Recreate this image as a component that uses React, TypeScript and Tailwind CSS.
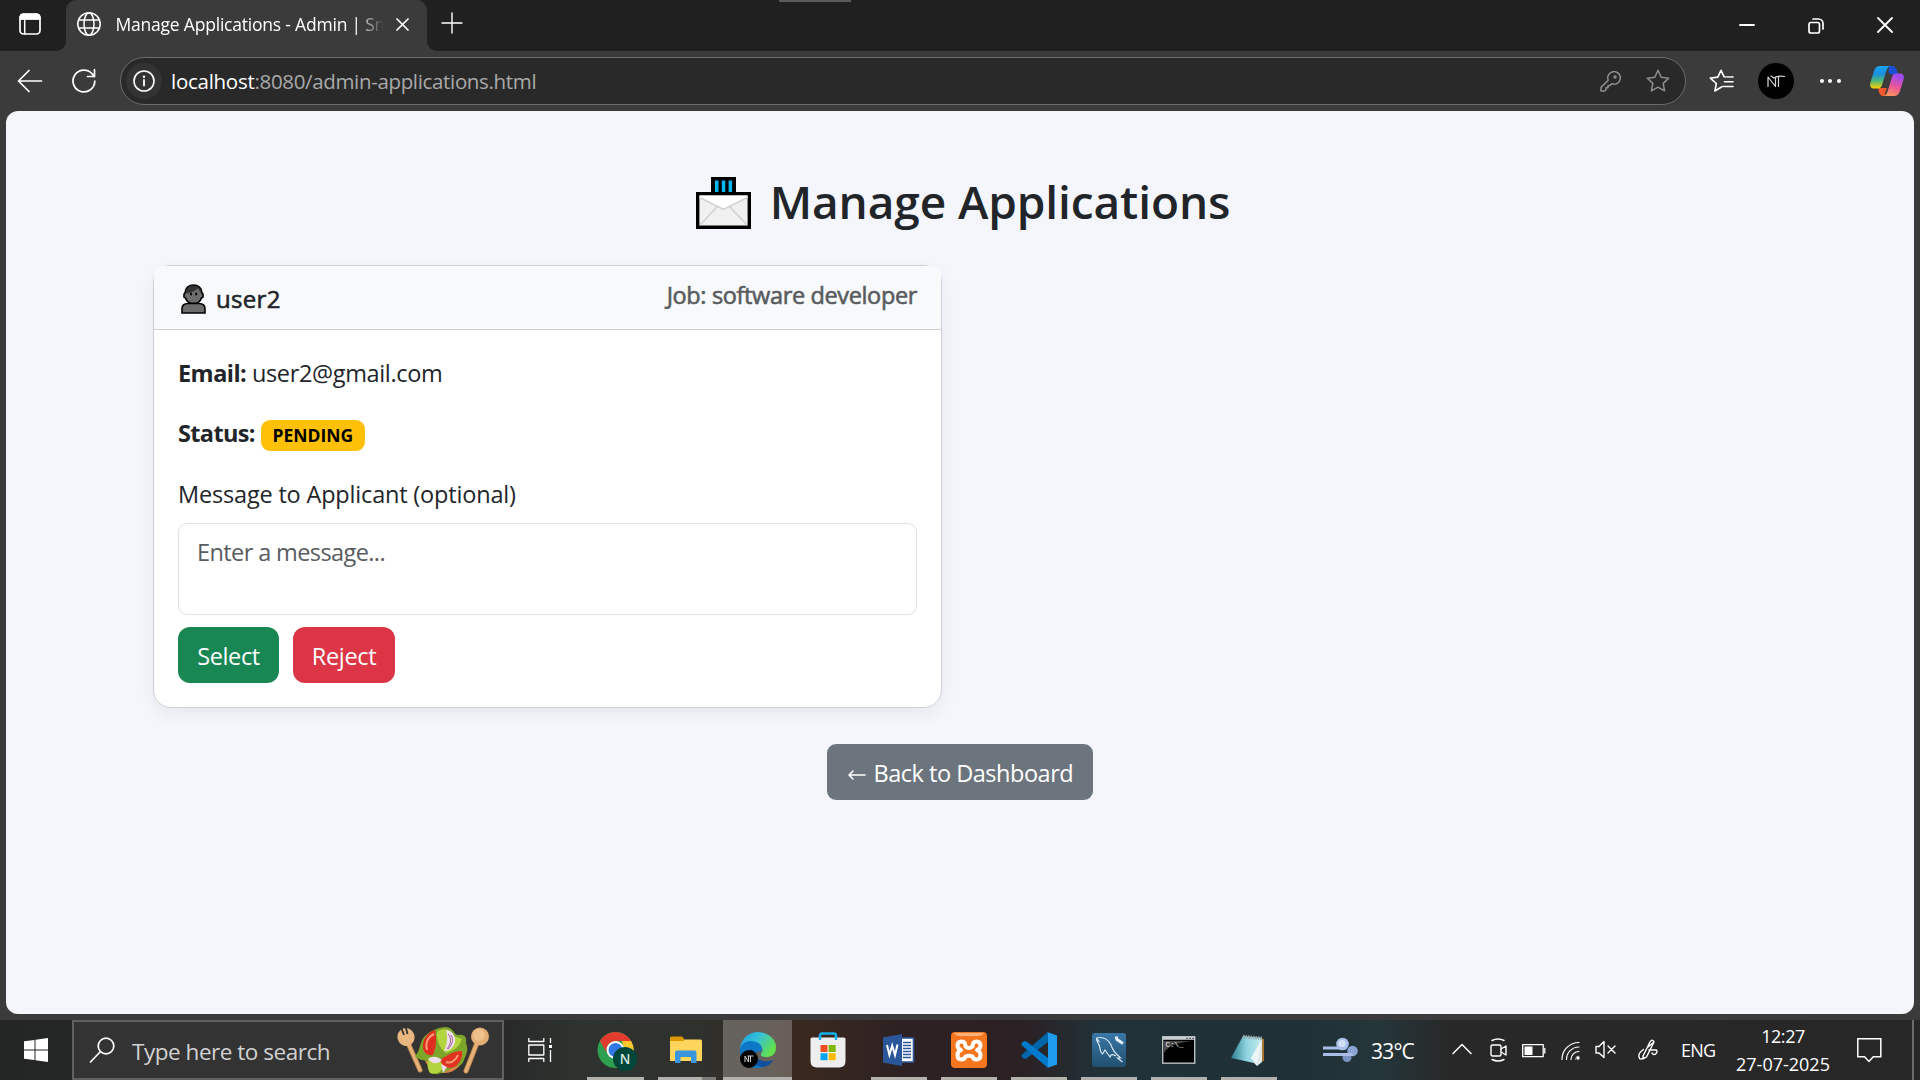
import React from "react";

type IconProps = { w: number; h: number; children: React.ReactNode; className?: string };

function Icon({ w, h, children, className }: IconProps) {
  return (
    <svg width={w} height={h} viewBox={`0 0 ${w} ${h}`} fill="none" stroke="currentColor" strokeLinecap="round" strokeLinejoin="round" className={`block shrink-0 ${className ?? ""}`}>
      {children}
    </svg>
  );
}

function TabStrip() {
  return (
    <div className="relative flex h-[51px] shrink-0 bg-[#202020] text-white">
      <div className="absolute left-[779px] top-0 h-[2px] w-[72px] bg-[#5a5a5a]" />
      <div className="flex h-full w-[66px] items-center pl-[19px] pb-[3px]">
        <Icon w={22} h={22}>
          <rect x="1" y="1" width="20" height="20" rx="3.5" strokeWidth="1.7" />
          <path d="M1 6V4a3 3 0 0 1 3-3h14a3 3 0 0 1 3 3v2z" fill="currentColor" strokeWidth="1" />
          <path d="M5.7 6v15" strokeWidth="1.5" />
        </Icon>
      </div>
      <div className="relative flex h-full w-[361px] rounded-t-[10px] bg-[#3b3b3b]">
        <svg width="10" height="10" className="absolute -left-[10px] bottom-0"><path d="M10 0v10H0A10 10 0 0 0 10 0z" fill="#3b3b3b" /></svg>
        <svg width="10" height="10" className="absolute -right-[10px] bottom-0"><path d="M0 0v10h10A10 10 0 0 1 0 0z" fill="#3b3b3b" /></svg>
        <Icon w={24} h={24} className="ml-[11px] mt-[12px]">
          <g strokeWidth="1.5">
            <circle cx="12" cy="12" r="11.2" />
            <ellipse cx="12" cy="12" rx="5" ry="11.2" />
            <path d="M2 8h20M2 16h20" />
          </g>
        </Icon>
        <div className="ml-[14.500px] mt-[9px] h-[30px] w-[272px] whitespace-nowrap leading-[30px] text-[17.5px] tracking-[-0.21px] [mask-image:linear-gradient(to_right,#000_240px,transparent_268px)]">
          Manage Applications - Admin | Sm
        </div>
        <Icon w={13} h={13} className="mt-[18px] ml-[8.500px]"><path d="M1 1l11 11M12 1L1 12" strokeWidth="1.7" /></Icon>
      </div>
      <Icon w={22} h={22} className="ml-[14px] mt-[12px]"><path d="M11 1v20M1 11h20" strokeWidth="1.4" /></Icon>
      <div className="ml-auto flex pr-[27px]">
        <Icon w={16} h={16} className="mt-[17px]"><path d="M1 8h14" strokeWidth="1.9" /></Icon>
        <Icon w={16} h={16} className="ml-[53px] mt-[18px]">
          <g strokeWidth="1.7"><rect x="1" y="4.5" width="10.5" height="10.5" rx="2" /><path d="M5 1h5.500a4.500 4.500 0 0 1 4.500 4.500V11" /></g>
        </Icon>
        <Icon w={16} h={16} className="ml-[53px] mt-[17px]"><path d="M1 1l14 14M15 1L1 15" strokeWidth="1.8" /></Icon>
      </div>
    </div>
  );
}

const STAR = "M12 1.300l3.200 6.900 7.500.95-5.500 5.200 1.400 7.500L12 18.200l-6.600 3.650 1.400-7.500-5.500-5.200 7.500-.95z";

function Toolbar() {
  return (
    <div className="flex h-[60px] shrink-0 items-center bg-[#3b3b3b] text-white">
      <div className="flex w-[60px] justify-center">
        <Icon w={26} h={24}><path d="M1.500 12h23M12 1.500L1.500 12 12 22.500" strokeWidth="1.7" /></Icon>
      </div>
      <div className="flex w-[60px] pl-[12px]">
        <Icon w={24} h={26}><path d="M22.800 13A10.900 10.900 0 1 1 20 5.700L22.500 8.500M22.500 1.500v7h-7" strokeWidth="1.7" /></Icon>
      </div>
      <div className="flex h-[48px] w-[1566px] items-center rounded-full border border-[#6b6b6b] bg-[#292929]">
        <div className="ml-[5px] flex h-[36px] w-[36px] items-center justify-center rounded-full bg-[#333333]">
          <Icon w={22} h={22}>
            <circle cx="11" cy="11" r="10" strokeWidth="1.6" /><path d="M11 10v5.500" strokeWidth="1.8" /><circle cx="11" cy="6.800" r="1.200" fill="currentColor" stroke="none" />
          </Icon>
        </div>
        <div className="ml-[9px] whitespace-nowrap text-[20.5px] leading-[30px] text-[#a9a9a9]">
          <span className="tracking-[-0.27px] text-white">localhost</span><span className="tracking-[-0.34px]">:8080/admin-applications.html</span>
        </div>
        <div className="ml-auto mr-[15px] flex items-center gap-[25px] text-[#8f8f8f]">
          <Icon w={21} h={21}>
            <g strokeWidth="1.5"><path d="M8.200 9.300a6.300 6.300 0 1 1 3.600 3.500L10 14.500H8v2.200H6v2.100l-1.300 1.200H1v-3.600z" /><circle cx="15" cy="6" r="1" /></g>
          </Icon>
          <Icon w={24} h={24}><path d={STAR} strokeWidth="1.5" /></Icon>
        </div>
      </div>
      <div className="flex w-[72px] justify-center">
        <Icon w={25} h={24} className="-translate-x-[1px]">
          <path d="M12.500 18l-6.600 4 1.400-7.500-6-5.400 7.500-.95L12 1.300l3.200 6.500 8.800.2M15.500 12.700h8.500M13.500 17.500h10.500" strokeWidth="1.6" />
        </Icon>
      </div>
      <div className="flex h-[36px] w-[36px] items-center justify-center rounded-full bg-black">
        <Icon w={20} h={14}><path d="M2 12.500V3L9.500 12.500V4M5 2l3 2M8.500 3.500q4-2 10-1M12.500 3v9.500" strokeWidth="1.2" stroke="#d8d8d8" /></Icon>
      </div>
      <div className="flex w-[74px] justify-center gap-[4.500px] pr-[2px]">
        <i className="h-[4px] w-[4px] rounded-full bg-white" /><i className="h-[4px] w-[4px] rounded-full bg-white" /><i className="h-[4px] w-[4px] rounded-full bg-white" />
      </div>
      <svg width="36" height="32" viewBox="0 0 36 32" className="block translate-x-[1px]">
        <defs>
          <linearGradient id="cpA" x1="0" y1="0" x2="0" y2="1"><stop offset="0" stopColor="#18a4f0" /><stop offset=".35" stopColor="#1a8fe0" /><stop offset=".65" stopColor="#4cb87a" /><stop offset="1" stopColor="#ffd200" /></linearGradient>
          <linearGradient id="cpB" x1="0.3" y1="0" x2="0" y2="1"><stop offset="0" stopColor="#a24bf0" /><stop offset=".45" stopColor="#e8559a" /><stop offset="1" stopColor="#ffa04d" /></linearGradient>
        </defs>
        <path d="M20 1h3c3 0 4 2 5 5l1 3.500h-5c-3 0-4-1-4.500-3z" fill="#1b4fd8" />
        <path d="M9 23h9l-2 5c-.5 2 1 3 2 3h-3c-3 0-4-1-5-4z" fill="#f4582e" />
        <path d="M11 1h11c-3 0-4 3-5 6l-4 13c-.8 2.500-2 3.500-4 3.500H5c-3.500 0-4.500-2.500-3.500-6L5 6c1-3.500 3-5 6-5z" fill="url(#cpA)" />
        <path d="M25 31H14c3 0 4-3 5-6l4-13c.8-2.500 2-3.500 4-3.500h4c3.500 0 4.500 2.500 3.500 6L31 26c-1 3.500-3 5-6 5z" fill="url(#cpB)" />
      </svg>
    </div>
  );
}

function EnvelopeIcon() {
  return (
    <svg width="56" height="52" viewBox="0 0 56 52" className="block shrink-0">
      <path d="M15 0h25v17H15z" fill="#000" />
      <path d="M19 3.500h3.500V15H19zM25.800 3.500h3.500V15h-3.500zM32.600 3.500h3.500V15h-3.500z" fill="#00b9f2" />
      <path d="M1.700 16.700h51.600v33.600H1.700z" fill="#f1f1f1" stroke="#000" strokeWidth="3.400" />
      <path d="M3.500 18.500h48v2.500L28 32.500 3.500 21z" fill="#fff" />
      <path d="M3.500 20.500l24 12 24-12M4 48l17-18M51 48L34 30" fill="none" stroke="#d0d0d0" strokeWidth="1.500" />
    </svg>
  );
}

function PersonIcon() {
  return (
    <svg width="26" height="30" viewBox="0 0 26 30" className="block shrink-0">
      <path d="M4 9C4 4 8 1 12.500 1S21 4 21 9l1 1v3l-1.500 1c-1 3-4 5.500-8 5.500s-7-2.500-8-5.500L3 13v-3z" fill="#6d6d6d" stroke="#000" strokeWidth="1.600" />
      <path d="M4.800 9.500C4.500 5 8 1.800 12.500 1.800S20 5 20.300 9.500C19 8 18 5.500 16.500 4.500 13 8 8 9 4.800 9.500z" fill="#333" />
      <path d="M10 8.800v2.400M15.200 8.800v2.400" stroke="#000" strokeWidth="1.800" />
      <path d="M1 29v-4c0-3.500 2.500-5.500 6-5.500h11c3.500 0 6 2 6 5.500v4z" fill="#6d6d6d" stroke="#000" strokeWidth="1.600" />
    </svg>
  );
}

function Page() {
  return (
    <div className="h-[909px] bg-[#3b3b3b] px-[6px] pb-[6px]">
      <main className="flex h-[903px] w-[1908px] flex-col rounded-[12px] bg-[#f4f6fb] px-[147px] pt-[60px] text-[#212529]">
        <h1 className="flex h-[60px] justify-center pl-[6px] text-[46px] font-semibold leading-[61px]">
          <span className="mt-[6px]"><EnvelopeIcon /></span>
          <span className="ml-[18px] tracking-[-0.1px]">Manage Applications</span>
        </h1>
        <div className="mt-[34px] grid w-[1612px] grid-cols-2 gap-[36px]">
          <section className="w-[789px] rounded-[18px] border border-[#cdd0d4] bg-white shadow-[0_6px_18px_rgba(0,0,0,0.06)]">
            <header className="flex h-[64px] justify-between rounded-t-[9px] border-b border-[#cdd0d4] bg-[#f8f9fb] px-[24px]">
              <div className="flex pl-[3px] pt-[18px] text-[24px] leading-[32px] tracking-[0.3px] [-webkit-text-stroke:0.6px]">
                <PersonIcon />
                <span className="ml-[9px] mt-[-1px]">user2</span>
              </div>
              <div className="pt-[13px] text-[23.500px] leading-[32px] tracking-[-0.36px] text-[#595c5f] [-webkit-text-stroke:0.6px]">Job: software developer</div>
            </header>
            <div className="h-[377px] px-[24px] text-[23.500px]">
              <p className="pt-[25px] leading-[36px] tracking-[-0.35px]"><b className="font-bold tracking-[-0.55px]">Email:</b> user2@gmail.com</p>
              <p className="mt-[24px] flex leading-[36px]">
                <b className="font-bold tracking-[-0.65px]">Status:</b>
                <span className="ml-[6px] mt-[5px] flex h-[31px] w-[104px] items-center justify-center rounded-[9px] bg-[#ffc107] pb-[2px] text-[17.500px] font-bold text-black">PENDING</span>
              </p>
              <label className="mt-[25px] block leading-[36px] tracking-[-0.18px]">Message to Applicant (optional)</label>
              <div className="mt-[11px] h-[92px] rounded-[9px] border border-[#dee2e6] px-[18px] pt-[10px] leading-[36px] tracking-[-0.6px] text-[#595c5f]">Enter a message...</div>
              <div className="mt-[12px] flex gap-[14px] leading-[58px] tracking-[-0.35px] text-white">
                <div className="h-[56px] w-[101px] rounded-[12px] bg-[#198754] text-center">Select</div>
                <div className="h-[56px] w-[102px] rounded-[12px] bg-[#dc3545] text-center">Reject</div>
              </div>
            </div>
          </section>
        </div>
        <div className="mx-auto mt-[36px] flex h-[56px] w-[266px] rounded-[9px] bg-[#6c757d] pl-[20px] text-[23.500px] leading-[58px] tracking-[-0.48px] text-white">
          <Icon w={19} h={14} className="mt-[24px]"><path d="M2 7h16M6 3L2 7l4 4" strokeWidth="1.600" /></Icon>
          <span className="ml-[7.500px]">Back to Dashboard</span>
        </div>
      </main>
    </div>
  );
}

function Slot({ children, w70, line = true, active }: { children: React.ReactNode; w70?: boolean; line?: boolean; active?: boolean }) {
  return (
    <div className={`relative flex h-[60px] items-center justify-center ${w70 ? "w-[70px]" : "w-[71px]"}`}>
      {active && <div className="absolute inset-x-[1px] inset-y-0 bg-white/25" />}
      <div className="relative">{children}</div>
      {line && <div className={`absolute bottom-0 h-[3px] bg-[#b3b1ac] ${active ? "inset-x-[1px]" : "inset-x-[7px]"}`} />}
    </div>
  );
}

function Salad() {
  return (
    <svg width="94" height="50" viewBox="0 0 94 50" className="block">
      <g stroke="#c98d52" strokeWidth="5" strokeLinecap="round"><path d="M11 17l12 27M80 17L69 45" /></g>
      <g stroke="#e6b27a" strokeWidth="3" strokeLinecap="round"><path d="M11 17l12 27M80 17L69 45" /></g>
      <ellipse cx="9" cy="11" rx="8.500" ry="9" fill="#e8b780" transform="rotate(-18 9 11)" />
      <path d="M4 1l3 8M8.500 0l2 8" stroke="#333" strokeWidth="1.800" />
      <circle cx="83" cy="10.500" r="9" fill="#e3ae75" /><circle cx="82" cy="9" r="6" fill="#edc08c" />
      <circle cx="47" cy="26" r="21" fill="#d8854a" />
      <path d="M18 30c6-6 4-14 10-20 5-5 14-9 20-9 8 0 8 6 12 8 6-1 10 0 9 8 3 7 0 12-2 17-3 8-8 5-13 9-6 3-14 7-20 4-4-3 0-8-4-12-4-1-9-1-12-5z" fill="#7da52a" />
      <path d="M40 6c5-5 15-3 17 4l8 3c-3 9-9 12-16 14-6-4-10-14-9-21zM32 32c8-3 14 1 15 8-3 7-9 9-14 7-3-5-3-10-1-15z" fill="#b2d43f" />
      <path d="M38 4c-8 2-13 11-12 18 1 5 5 8 10 7 3-7 4-15 2-25z" fill="#df2d20" /><path d="M37 8c-6 3-9 9-7 16" stroke="#ff9a78" strokeWidth="2" fill="none" />
      <path d="M43 34c5-4 14-9 22-9 1 8-4 16-11 17-6 0-9-3-11-8z" fill="#e13222" /><path d="M49 36c5 2 10-2 12-7" stroke="#ff9a78" strokeWidth="2" fill="none" />
      <path d="M49 4c7 1 10 7 9 12s-5 9-11 9c3-6 4-13 2-21z" fill="#efdcec" /><path d="M51 8c4 4 3 10-1 15M54 9c3 5 1 10-3 14" stroke="#a06498" fill="none" />
      <path d="M31 33c5-4 10-2 14 1-4 4-9 5-14-1zM44 38l6 3-4 6z" fill="#efdcec" />
    </svg>
  );
}

function Taskbar() {
  return (
    <footer className="flex h-[60px] shrink-0 bg-[linear-gradient(to_right,#242525_0px,#282928_500px,#2e332f_580px,#2f312d_700px,#39291f_800px,#2e2123_900px,#2b2023_1020px,#203238_1100px,#1f3136_1300px,#24363a_1380px,#282828_1450px,#272727_1920px)] text-white">
      <div className="flex w-[72px] items-center justify-center">
        <svg width="24" height="24" viewBox="0 0 24 24" className="block"><path d="M0 3.300L10.500 2v9.500H0zM11.500 1.800L24 0v11.500H11.500zM0 12.500h10.500V22L0 20.700zM11.500 12.500H24V24l-12.500-1.800z" fill="#fff" /></svg>
      </div>
      <div className="flex h-[60px] w-[432px] border-2 border-[#5f5f5f] bg-[#333333]">
        <Icon w={26} h={26} className="ml-[15px] mt-[15px]"><circle cx="17" cy="9" r="7.800" strokeWidth="1.700" /><path d="M11.500 14.500L1.500 25" strokeWidth="1.700" /></Icon>
        <div className="ml-[17px] mt-[14px] w-[265px] whitespace-nowrap text-[22.500px] leading-[32px] tracking-[-0.47px] text-[#d2d2d2]">Type here to search</div>
        <div className="mt-[4px]"><Salad /></div>
      </div>
      <div className="flex w-[76px] items-center pl-[24px]">
        <Icon w={25} h={24}><g strokeWidth="1.300" strokeLinecap="butt"><path d="M.8 0v3.500h15V0M.8 24v-3.500h15V24M.8 7h15v10H.8zM22.500 0v5M22.500 12v12" /><path d="M21 7h3v3h-3z" fill="currentColor" stroke="none" /></g></Icon>
      </div>
      <Slot>
        <svg width="40" height="40" viewBox="0 0 40 40" className="block translate-x-[1px] translate-y-[1px]">
          <circle cx="18.500" cy="19" r="18" fill="#2e9e4f" />
          <path d="M3 10A18 18 0 0 1 34.100 10H18.500A9 9 0 0 0 10.700 23.500z" fill="#e33b2e" />
          <path d="M34.100 10A18 18 0 0 1 18.500 37L26.300 23.500A9 9 0 0 0 26 14l-1-4z" fill="#fcc72b" />
          <circle cx="18.500" cy="19" r="9" fill="#fff" /><circle cx="18.500" cy="19" r="7" fill="#2f78e6" />
          <circle cx="28" cy="28" r="12" fill="#00463b" />
          <text x="28" y="33" textAnchor="middle" fontSize="13.500" fontWeight="600" fontFamily="Open Sans" fill="#d5e6e2">N</text>
        </svg>
      </Slot>
      <Slot>
        <svg width="34" height="28" viewBox="0 0 34 28" className="block -translate-x-[1px]">
          <path d="M1 2q0-1.500 1.500-1.500H13l3 3.500v3H1z" fill="#dd9a00" /><path d="M1 5h13l2-1.500h15.500q1.500 0 1.500 1.500v20H1z" fill="#ffd55c" />
          <path d="M6 27V16.500q0-2 2-2h17.500q2 0 2 2V27H22v-6H11.500v6z" fill="#3a96dd" />
        </svg>
        <div className="absolute -bottom-[16px] right-[-12px] z-10 h-[3px] w-[14px] bg-[#7d7c79]" />
      </Slot>
      <Slot active>
        <svg width="38" height="38" viewBox="0 0 38 38" className="block">
          <defs><linearGradient id="eg" x1="0" y1="0" x2="1" y2=".5"><stop offset="0" stopColor="#1c9be0" /><stop offset=".5" stopColor="#35c1d8" /><stop offset="1" stopColor="#62e04e" /></linearGradient></defs>
          <path d="M1 19C1 9 9 1 19 1s18 7 18 15-5 10-10 10-6-2-4.500-4 2-6-3-8.500S6 9 1 19z" fill="url(#eg)" />
          <path d="M1 19c0-5 5-9 11-9 7 0 11 4 11 8 0 1-.5 2-1.500 3-2-2-6 0-5 5 1 7 9 9 15 5C28 36 22 37 18 37 8 37 1 29 1 19z" fill="#0d78c8" />
          <path d="M12 18c-1 10 4 18 12 18 5-1 8-3 10-7-7 3-16 1-18-6 0-2 0-3-4-5z" fill="#124f9c" />
          <circle cx="10" cy="28" r="9" fill="#000" />
          <path d="M6 31v-6l3.500 6v-6M8.500 25h6M11.500 25v6" stroke="#ccc" fill="none" />
        </svg>
      </Slot>
      <Slot line={false}>
        <svg width="36" height="36" viewBox="0 0 36 36" className="block -translate-x-[1px]">
          <path d="M10 7V3.500Q10 1.500 12 1.500h12q2 0 2 2V7" fill="none" stroke="#16b0ee" strokeWidth="2.400" />
          <path d="M.5 7q0-1.500 1.500-1.500h32q1.500 0 1.500 1.500v22q0 6.500-6.500 6.500H7Q.5 35.500.5 29z" fill="#eeeeee" />
          <path d="M10 4v4M26 4v4" stroke="#16b0ee" strokeWidth="2.400" />
          <path d="M10.500 13h7v7h-7z" fill="#f25022" /><path d="M18.700 13h7v7h-7z" fill="#7fba00" /><path d="M10.500 21.200h7v7h-7z" fill="#00a4ef" /><path d="M18.700 21.200h7v7h-7z" fill="#ffb900" />
        </svg>
      </Slot>
      <Slot w70>
        <svg width="32" height="32" viewBox="0 0 32 32" className="block">
          <path d="M17 4h13.500v24H17z" fill="#fff" stroke="#2b579a" strokeWidth="1.600" /><path d="M20 8.500h8M20 11.500h8M20 14.500h8M20 17.500h8M20 20.500h8M20 23.500h8" stroke="#2b579a" strokeWidth="1.300" />
          <path d="M0 3.500L19 0v32L0 28.500z" fill="#2b579a" /><path d="M4 11l2.400 10L9.200 11.500 12 21l2.500-10.500" fill="none" stroke="#fff" strokeWidth="2" />
        </svg>
      </Slot>
      <Slot w70>
        <svg width="36" height="36" viewBox="0 0 36 36" className="block">
          <rect width="36" height="36" rx="4" fill="#f4761f" /><path d="M3 1h30q-2 3-6 3H9Q5 4 3 1z" fill="#fbb27c" />
          <path d="M14.500 14.500q0-5-4-5t-4 4q0 3 3.500 4.500-3.500 1.500-3.500 5 0 4.500 4 4.500 3 0 4-3 3.500-1.500 7 0 1 3 4 3 4 0 4-4.500 0-3.500-3.500-5 3.500-1.500 3.500-4.500 0-4-4-4t-4 5q-3.500 3-7 0z" fill="none" stroke="#fff" strokeWidth="4" strokeLinejoin="round" />
        </svg>
      </Slot>
      <Slot w70>
        <svg width="36" height="36" viewBox="0 0 36 36" className="block">
          <path d="M1 22.500L27 0v10L5.500 26.500q-1.500 1-3 0l-1.700-1.500Q0 23.500 1 22.500z" fill="#0065a9" />
          <path d="M1 13.500L27 36V26L5.500 9.500q-1.500-1-3 0L.8 11Q0 12.500 1 13.500z" fill="#007acc" />
          <path d="M26 0l10 3.500v29L26 36q1 0 1-2V2q0-2-1-2z" fill="#1f9cf0" />
        </svg>
      </Slot>
      <Slot w70>
        <svg width="34" height="34" viewBox="0 0 34 34" className="block">
          <defs><linearGradient id="mg" x1="0" y1="0" x2="0" y2="1"><stop offset="0" stopColor="#3a78a8" /><stop offset="1" stopColor="#21506f" /></linearGradient></defs>
          <rect width="34" height="34" rx="3" fill="url(#mg)" />
          <path d="M4.500 5c6-1.500 11 1 14 6 2 4 2 7 7 11l3 3h-3l5 4M4.500 5c0 4 2 5 3 8s0 6 3 8l2.500-4 5 7c1-3 2-3 6-1M4.500 5l3 4" fill="none" stroke="#d8e8f2" strokeWidth="1.200" />
          <path d="M24 3.500l1 3 3 2 3 2" stroke="#e8f2f8" strokeWidth="2.800" fill="none" />
        </svg>
      </Slot>
      <Slot w70>
        <svg width="34" height="28" viewBox="0 0 34 28" className="block">
          <rect x=".7" y=".7" width="32" height="26.500" fill="#000" stroke="#b9c0c4" strokeWidth="1.400" /><path d="M1 1h32v2.800H1z" fill="#c9ced2" /><path d="M24 2.300h8" stroke="#555" strokeDasharray="2 1" />
          <path d="M2 5h28C18 6 6 9 2 17z" fill="#4a4a4a" />
          <text x="3.500" y="10.500" fontSize="7.500" fontFamily="Liberation Mono" fill="#eee">C:\_</text>
        </svg>
      </Slot>
      <Slot w70>
        <svg width="34" height="32" viewBox="0 0 34 32" className="block -translate-x-[1px]">
          <defs><linearGradient id="ng" x1="0" y1="0" x2="1" y2="0"><stop offset="0" stopColor="#2a8090" /><stop offset=".5" stopColor="#8fd3de" /><stop offset="1" stopColor="#c8edf2" /></linearGradient></defs>
          <path d="M28 4l5 1v22l-5 1z" fill="#a8762e" /><path d="M18 24L31 4v24l-5 4z" fill="#dfe8ea" />
          <path d="M12 2l19 2-8 25L0 24z" fill="url(#ng)" /><path d="M20 24L31 5l-5 25z" fill="#eef5f6" /><path d="M12 2.500l19 2" stroke="#9aa" strokeWidth="3.500" strokeDasharray="1.500 1" />
        </svg>
      </Slot>
      <svg width="36" height="26" viewBox="0 0 36 26" className="ml-[39px] mt-[17px] block">
        <circle cx="19.500" cy="7" r="6.300" fill="#a9c2ea" /><circle cx="29.500" cy="14" r="5.300" fill="#8aa5d6" /><circle cx="24" cy="20.500" r="4.500" fill="#7892c4" />
        <path d="M0 11h20.500M0 17.500h30" stroke="#a9bde6" strokeWidth="3.200" />
        <circle cx="19" cy="6.500" r="3.500" fill="#d3e0f7" />
      </svg>
      <div className="ml-[12px] mt-[15px] w-[80px] text-[21px] leading-[32px] tracking-[-0.8px]">33°C</div>
      <Icon w={20} h={12} className="ml-[1px] mt-[23px]"><path d="M1 10.500L10 1.500l9 9" strokeWidth="1.500" /></Icon>
      <Icon w={18} h={24} className="ml-[18px] mt-[18px]"><g strokeWidth="1.400"><rect x="1" y="7" width="10" height="11" rx="1.500" /><path d="M11 11l5-3v9l-5-3M2 2.500Q8-.5 14 2.500M2 21.500q6 3 12 0" /></g></Icon>
      <Icon w={24} h={14} className="ml-[14px] mt-[24px]"><path d="M.7.7h20.500v12H.7zM22.800 4.500v4.500" strokeWidth="1.300" /><path d="M2.500 2.500h8v8.500h-8z" fill="currentColor" stroke="none" /></Icon>
      <Icon w={20} h={20} className="ml-[15px] mt-[21px]"><g strokeWidth="1.200"><path d="M1 18.500C1 9 8.500 1.500 18 1.500M5.500 18.500C5.500 11.500 11 6 18 6M10 18.500c0-4.500 3.500-8 8-8" /><circle cx="17" cy="17" r="1.700" fill="currentColor" stroke="none" /><path d="M14.500 18.500q0-3 3.500-3.500" opacity=".4" /></g></Icon>
      <Icon w={22} h={20} className="ml-[14px] mt-[20px]"><path d="M1 6.500h3L9 1.500v16L4 13H1zM13 6l7 7M20 6l-7 7" strokeWidth="1.400" /></Icon>
      <Icon w={22} h={22} className="ml-[20px] mt-[19px]"><g strokeWidth="1.400"><path d="M6 17L13 3q1.500-2.500 3-1.500T16 5L9.500 18 6 20zM6.500 10.500Q1 14 2 18t5 .5M12 11h7q2 1 0 3.500t-4-.5M11 8l6-5" /></g></Icon>
      <div className="ml-[22px] mt-[14px] w-[47px] text-[18px] leading-[32px] tracking-[-0.8px]">ENG</div>
      <div className="flex w-[110px] flex-col items-center pt-[2px] text-[18px] leading-[28px]"><span className="tracking-[-0.45px]">12:27</span><span>27-07-2025</span></div>
      <Icon w={25} h={25} className="ml-[19px] mt-[18px]"><path d="M.8.8h23v18h-7.500L12 23.500 7.500 18.800H.8z" strokeWidth="1.500" strokeLinejoin="miter" /></Icon>
      <div className="ml-auto mr-[6px] h-[60px] w-[2px] bg-[#6a6a6a]" />
    </footer>
  );
}

export default function App() {
  return (
    <div className="flex h-[1080px] w-[1920px] flex-col overflow-hidden bg-[#3b3b3b] font-['Open_Sans',sans-serif]">
      <TabStrip />
      <Toolbar />
      <Page />
      <Taskbar />
    </div>
  );
}
